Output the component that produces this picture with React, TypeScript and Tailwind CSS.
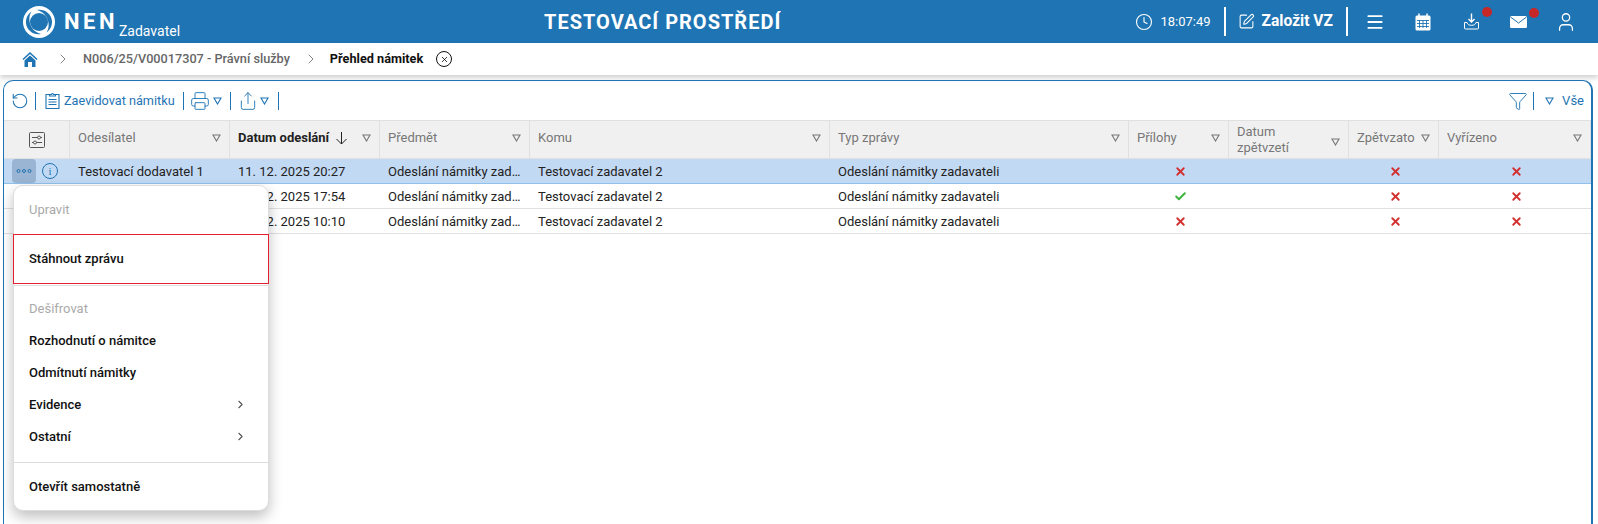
import { Check, ChevronRight, Clock, Filter, Menu, Printer, RotateCcw, Share, SquarePen, User, X } from 'lucide-react';

const columns = 'grid grid-cols-[66px_160px_150px_150px_300px_299px_100px_120px_90px_152px]';

type Row = { sender: string; date: string; attach: boolean };

const rows: Row[] = [
  { sender: 'Testovací dodavatel 1', date: '11. 12. 2025 20:27', attach: false },
  { sender: 'Testovací dodavatel 1', date: '11. 12. 2025 17:54', attach: true },
  { sender: 'Testovací dodavatel 1', date: '11. 12. 2025 10:10', attach: false },
];

function Triangle({ className = 'text-[#777]' }: { className?: string }) {
  return (
    <svg className={className} width="9" height="8" viewBox="0 0 9 8" fill="none" stroke="currentColor" strokeWidth="1.1" aria-hidden>
      <path d="M1 1h7L4.500 7z" />
    </svg>
  );
}

function Logo() {
  return (
    <svg width="32" height="32" viewBox="0 0 32 32" aria-hidden>
      <circle cx="16" cy="16" r="16" fill="#fff" />
      <path d="M14 4C21 2.500 28.500 7.500 29 15c.3 5-2 9-5.500 11.500 1.800-3 2.500-6 2-9.500C24.800 10.500 20 5.500 14 4z" fill="#1f74b3" />
      <path d="M18 28C11 29.500 3.500 24.500 3 17c-.3-5 2-9 5.500-11.500-1.800 3-2.500 6-2 9.500C7.200 21.500 12 26.500 18 28z" fill="#1f74b3" />
      <circle cx="16" cy="16" r="9" fill="#1f74b3" />
    </svg>
  );
}

function Header({ children, wrap }: { children: React.ReactNode; wrap?: boolean }) {
  return (
    <div className={`flex items-center justify-between border-r border-[#e0e0e0] pl-2 pr-2 ${wrap ? '' : 'pb-1'}`}>
      <span className={`text-[#777] ${wrap ? 'leading-[16px]' : ''}`}>{children}</span>
      <Triangle className={wrap ? 'mt-1 text-[#777]' : 'text-[#777]'} />
    </div>
  );
}

function Mark({ ok }: { ok: boolean }) {
  return ok ? (
    <Check size={13} strokeWidth={3.6} className="text-[#3cb43c]" />
  ) : (
    <X size={13} strokeWidth={3.4} className="text-[#d32f2f]" />
  );
}

function MenuItem({ label, disabled, more }: { label: string; disabled?: boolean; more?: boolean }) {
  return (
    <div className={`flex h-8 items-center justify-between pl-[15px] pr-[21px] ${disabled ? 'text-[#aaa]' : 'font-medium text-[#111]'}`}>
      <span>{label}</span>
      {more ? <ChevronRight size={13} className="-mt-px text-[#555]" /> : null}
    </div>
  );
}

export default function App() {
  return (
    <div className="flex h-[524px] w-[1598px] flex-col overflow-hidden bg-white font-['Roboto',sans-serif] text-[13px]">
      <header className="flex h-[43px] items-center bg-[#1f74b3] text-white">
        <div className="ml-[23px] flex w-[160px] shrink-0 items-center">
          <Logo />
          <span className="ml-[9px] text-[22px] font-bold leading-none tracking-[3.5px]">NEN</span>
          <span className="mt-[19px] ml-px text-[14px] leading-none">Zadavatel</span>
        </div>
        <div className="ml-[361px] text-[20px] font-bold tracking-[1px]">TESTOVACÍ PROSTŘEDÍ</div>
        <div className="ml-auto flex items-center">
          <Clock size={18} strokeWidth={1.5} />
          <span className="ml-[7px] text-[13px]">18:07:49</span>
          <div className="ml-[13px] h-[29px] w-0.5 bg-white" />
          <SquarePen size={17} strokeWidth={1.5} className="ml-3" />
          <span className="ml-[7px] text-[15.6px] font-bold">Založit VZ</span>
          <div className="ml-[13px] h-[29px] w-0.5 bg-white" />
          <Menu size={20} strokeWidth={2.2} className="ml-[17px]" />
          <svg className="ml-[30px]" width="16" height="18" viewBox="0 0 16 18" aria-hidden>
            <rect x="0.500" y="2.500" width="15" height="15" rx="1.500" fill="#fff" />
            <path d="M4 0.500v4M12 0.500v4" stroke="#fff" strokeWidth="1.500" />
            <path d="M2 7.500h12M2 10.500h12M2 13.500h12M4.500 7v8M8 7v8M11.500 7v8" stroke="#1f74b3" strokeWidth="0.900" />
          </svg>
          <div className="relative ml-[32px]">
            <svg width="17" height="17" viewBox="0 0 17 17" fill="none" stroke="#fff" strokeWidth="1.400" aria-hidden>
              <path d="M8.500 0.500v8M5.500 6l3 3 3-3" />
              <path d="M4 9.500H1.500v5.500a1 1 0 0 0 1 1h12a1 1 0 0 0 1-1V9.500H13c-.5 2-2 2.800-4.500 2.800S4.500 11.500 4 9.500z" strokeWidth="1" />
            </svg>
            <span className="absolute -top-[6px] left-[19px] size-2.5 rounded-full bg-[#c62828]" />
          </div>
          <div className="relative ml-[30px]">
            <svg width="17" height="12" viewBox="0 0 17 12" aria-hidden>
              <rect width="17" height="12" rx="1.500" fill="#fff" />
              <path d="M0.500 1l8 6 8-6" fill="none" stroke="#1f74b3" strokeWidth="1" />
            </svg>
            <span className="absolute -top-[8px] left-[19px] size-2.5 rounded-full bg-[#c62828]" />
          </div>
          <User size={22} strokeWidth={1.4} className="ml-[28px] mr-[21px]" />
        </div>
      </header>

      <nav className="flex h-[32px] items-center text-[12.7px] shadow-[0_3px_5px_rgba(0,0,0,0.18)]">
        <svg className="ml-[22px]" width="16" height="16" viewBox="0 0 16 16" fill="#1f74b3" aria-hidden>
          <path d="M0.500 8L8 1l7.500 7-1 1L8 3 1.500 9z" />
          <path d="M2.500 9.500L8 4.500l5.500 5V16h-3.500v-5H6v5H2.500z" />
        </svg>
        <ChevronRight size={16} strokeWidth={1.2} className="ml-[17px] text-[#666]" />
        <span className="ml-[12px] font-medium text-[#666]">N006/25/V00017307 - Právní služby</span>
        <ChevronRight size={16} strokeWidth={1.2} className="ml-[13px] text-[#666]" />
        <span className="ml-[11px] font-bold text-[#111]">Přehled námitek</span>
        <span className="ml-[13px] flex size-4 items-center justify-center rounded-full border border-[#111]">
          <X size={9} strokeWidth={2} />
        </span>
      </nav>

      <main className="relative ml-[3px] mr-[5px] mt-[5px] flex-1 rounded-t-[10px] border-l border-r-2 border-t border-[#1f74b3]">
        <div className="flex h-[39px] items-center pl-[7px] text-[#1f74b3]">
          <RotateCcw size={18} strokeWidth={1.4} />
          <div className="ml-[6px] h-[18px] w-px bg-[#1f74b3]" />
          <svg className="ml-[9px]" width="15" height="17" viewBox="0 0 15 17" fill="none" stroke="currentColor" strokeWidth="1.100" aria-hidden>
            <path d="M4.500 2.500H1v14h13v-14h-3.500" />
            <path d="M4.500 4V2.500h2a1 1 0 0 1 2 0h2V4z" />
            <path d="M3.500 7.500h8M3.500 10h8M3.500 12.500h8" />
          </svg>
          <span className="ml-[4px] mt-px text-[12.7px]">Zaevidovat námitku</span>
          <div className="ml-[8px] h-[18px] w-px bg-[#1f74b3]" />
          <Printer size={20} strokeWidth={1.1} className="ml-[6px]" />
          <Triangle className="ml-[3px] text-[#1f74b3]" />
          <div className="ml-[8px] h-[18px] w-px bg-[#1f74b3]" />
          <Share size={20} strokeWidth={1.1} className="ml-[7px]" />
          <Triangle className="ml-[2px] text-[#1f74b3]" />
          <div className="ml-[9px] h-[18px] w-px bg-[#1f74b3]" />
          <Filter size={20} strokeWidth={1.1} className="ml-auto" />
          <div className="ml-[5px] h-[18px] w-px bg-[#1f74b3]" />
          <Triangle className="ml-[11px] text-[#1f74b3]" />
          <span className="ml-[8px] mr-[7px] mt-px">Vše</span>
        </div>

        <div className={`${columns} h-[39px] border-y border-[#e0e0e0] bg-[#f0f0f0]`}>
          <div className="flex items-center justify-center border-r border-[#e0e0e0]">
            <svg width="16" height="16" viewBox="0 0 16 16" fill="none" stroke="#555" strokeWidth="1" aria-hidden>
              <rect x="0.500" y="0.500" width="15" height="15" rx="1" />
              <path d="M3 5.500h5.500M11.500 5.500H13M3 10.500h1.500M7.500 10.500H13" />
              <circle cx="10" cy="5.500" r="1.500" />
              <circle cx="6" cy="10.500" r="1.500" />
            </svg>
          </div>
          <Header>Odesílatel</Header>
          <div className="flex items-center justify-between border-r border-[#e0e0e0] pb-1 pl-2 pr-2">
            <span className="flex items-center gap-1.5 font-bold text-[#222]">
              Datum odeslání
              <svg width="13" height="14" viewBox="0 0 13 14" fill="none" stroke="#222" strokeWidth="1" aria-hidden>
                <path d="M6.500 1v12M1.500 8l5 5 5-5" />
              </svg>
            </span>
            <Triangle />
          </div>
          <Header>Předmět</Header>
          <Header>Komu</Header>
          <Header>Typ zprávy</Header>
          <Header>Přílohy</Header>
          <Header wrap>
            Datum
            <br />
            zpětvzetí
          </Header>
          <Header>Zpětvzato</Header>
          <Header>Vyřízeno</Header>
        </div>

        {rows.map((row, i) => (
          <div
            key={row.date}
            className={`${columns} h-[25px] items-center border-b text-[#222] ${i === 0 ? 'border-[#90c0ec] bg-[#c2d9f4]' : 'border-[#e0e0e0]'}`}
          >
            <div className="flex items-center pl-2">
              {i === 0 ? (
                <>
                  <span className="flex h-6 w-6 items-center justify-center rounded-[4px] bg-[#9ab5d3]">
                    <svg width="16" height="4" viewBox="0 0 16 4" fill="none" stroke="#1f74b3" aria-hidden>
                      <circle cx="2.500" cy="2" r="1.500" />
                      <circle cx="8" cy="2" r="1.500" />
                      <circle cx="13.500" cy="2" r="1.500" />
                    </svg>
                  </span>
                  <span className="ml-[6px] flex size-4 items-center justify-center rounded-full border border-[#1f74b3] font-['Liberation_Serif',serif] text-[11px] leading-none text-[#1f74b3]">
                    i
                  </span>
                </>
              ) : null}
            </div>
            <div className="pl-2 pt-px">{row.sender}</div>
            <div className="pl-2 pt-px">{row.date}</div>
            <div className="truncate pl-2 pr-[9px] pt-px">Odeslání námitky zadavateli</div>
            <div className="pl-2 pt-px">Testovací zadavatel 2</div>
            <div className="pl-2 pt-px">Odeslání námitky zadavateli</div>
            <div className="flex justify-center pl-[3px]"><Mark ok={row.attach} /></div>
            <div />
            <div className="flex justify-center pl-[3px]"><Mark ok={false} /></div>
            <div className="flex justify-center pl-[3px]"><Mark ok={false} /></div>
          </div>
        ))}

        <div className="absolute left-[9px] top-[104px] w-[256px] rounded-[10px] border border-[#ddd] bg-white shadow-[0_6px_14px_rgba(0,0,0,0.25)]">
          <div className="flex h-[48px] items-center pl-[15px] text-[#aaa]">Upravit</div>
          <div className="-mx-px flex h-[50px] items-center border border-[#e5202e] pl-[15px] font-medium text-[#111]">Stáhnout zprávu</div>
          <div className="mt-px h-px bg-[#ddd]" />
          <div className="pt-[7px] pb-[9px]">
            <MenuItem label="Dešifrovat" disabled />
            <MenuItem label="Rozhodnutí o námitce" />
            <MenuItem label="Odmítnutí námitky" />
            <MenuItem label="Evidence" more />
            <MenuItem label="Ostatní" more />
          </div>
          <div className="h-px bg-[#ddd]" />
          <div className="flex h-[47px] items-center pl-[15px] font-medium text-[#111]">Otevřít samostatně</div>
        </div>
      </main>
    </div>
  );
}
